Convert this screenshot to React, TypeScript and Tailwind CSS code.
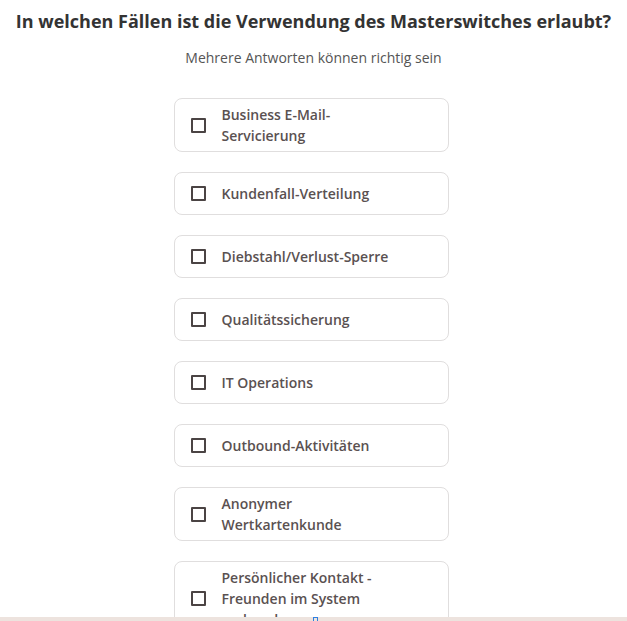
const options = [
  "Business E-Mail-Servicierung",
  "Kundenfall-Verteilung",
  "Diebstahl/Verlust-Sperre",
  "Qualitätssicherung",
  "IT Operations",
  "Outbound-Aktivitäten",
  "Anonymer Wertkartenkunde",
  "Persönlicher Kontakt - Freunden im System verbunden",
];

export default function App() {
  return (
    <div
      className="relative h-[621px] overflow-hidden bg-white"
      style={{ fontFamily: '"Open Sans", "Noto Sans", sans-serif' }}
    >
      <div className="flex flex-col items-center">
        <h1 className="pt-[8px] text-[18px] leading-[27px] font-bold text-[#333333]">
          In welchen Fällen ist die Verwendung des Masterswitches erlaubt?
        </h1>
        <p className="mt-[12px] text-[14px] leading-[21px] text-[#555555]">
          Mehrere Antworten können richtig sein
        </p>

        {/* Options */}
        <div className="mt-[30px] mr-[5px] flex flex-col gap-[20px]">
          {options.map((label) => (
            <label
              key={label}
              className="flex min-h-[43px] w-[275px] cursor-pointer items-center rounded-[8px] border border-[#e0dede] py-[5px] pl-[16px]"
            >
              <span className="h-[15px] w-[15px] shrink-0 rounded-[1px] border-2 border-[#4b4444]" />
              <span className="ml-[16px] w-[180px] text-[14px] leading-[21px] font-semibold text-[#5a5151]">
                {label}
              </span>
            </label>
          ))}
        </div>
      </div>

      {/* bottom bar */}
      <div className="absolute inset-x-0 bottom-0 h-[4px] bg-[#ede3de]">
        <div className="absolute left-[313px] top-0 h-[5px] w-[5px] border border-[#2f7fe0]" />
      </div>
    </div>
  );
}
